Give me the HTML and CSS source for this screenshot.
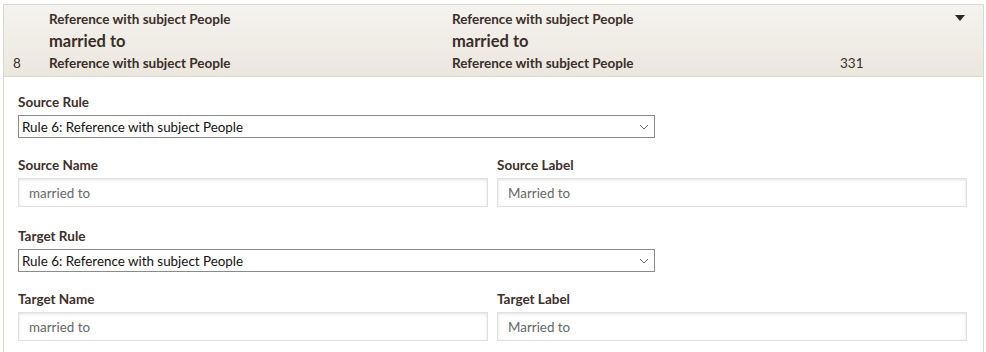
FILE: index.html
```html
<html>
<head>
<title>Mapping</title>
<link rel="stylesheet" href="styles.css">
</head>
<body>

<div class="panel">
	<div class="panelHead">
		<div class="num"></div>
		<div class="cell">Reference with subject People</div>
		<div class="cell">Reference with subject People</div>
		<div class="cell"></div>
		<div class="arrow"><svg width="10" height="6" viewBox="0 0 10 6"><path d="M0 0 L10 0 L5 6 Z" fill="#2e2622"/></svg></div>

		<div class="num"></div>
		<div class="cell big">married to</div>
		<div class="cell big">married to</div>
		<div class="cell"></div>
		<div></div>

		<div class="num">8</div>
		<div class="cell">Reference with subject People</div>
		<div class="cell">Reference with subject People</div>
		<div class="cell count">331</div>
		<div></div>
	</div>

	<div class="panelBody">
		<div class="group">
			<label>Source Rule</label>
			<div class="select">
				<span>Rule 6: Reference with subject People</span>
				<svg width="10" height="6" viewBox="0 0 10 6"><path d="M1 1 L5 5 L9 1" fill="none" stroke="#666" stroke-width="1"/></svg>
			</div>
		</div>
		<div class="row">
			<div class="group">
				<label>Source Name</label>
				<input type="text" value="married to">
			</div>
			<div class="group">
				<label>Source Label</label>
				<input type="text" value="Married to">
			</div>
		</div>
		<div class="group">
			<label>Target Rule</label>
			<div class="select">
				<span>Rule 6: Reference with subject People</span>
				<svg width="10" height="6" viewBox="0 0 10 6"><path d="M1 1 L5 5 L9 1" fill="none" stroke="#666" stroke-width="1"/></svg>
			</div>
		</div>
		<div class="row">
			<div class="group">
				<label>Target Name</label>
				<input type="text" value="married to">
			</div>
			<div class="group">
				<label>Target Label</label>
				<input type="text" value="Married to">
			</div>
		</div>
	</div>
</div>

</body>
</html>
```

FILE: styles.css
```css
body {
    margin: 0;
    background: #fff;
    font-family: Lato, "Open Sans", sans-serif;
    color: #3b2e28;
    overflow: hidden;
}
.panel {
    margin: 4px 2px 0 3px;
    border: 1px solid #dcd8ca;
    border-bottom: none;
    height: 347px;
}
.panelHead {
    display: grid;
    grid-template-columns: 45px 403px 388px 1fr 40px;
    grid-auto-rows: 22px;
    padding: 3px 0 2px;
    background: linear-gradient(#f5f3ee, #ebe7df);
    border-bottom: 1px solid #dcd8ca;
    font-size: 13.5px;
    font-weight: bold;
    align-items: center;
}
.panelHead .num,
.panelHead .count {
    font-weight: normal;
}
.panelHead .num {
    padding-left: 9px;
}
.panelHead .big {
    font-size: 16.5px;
}
.panelHead .arrow {
    display: flex;
    align-items: center;
    padding-left: 12px;
    padding-bottom: 3px;
}
.panelBody {
    padding: 17px 15px 0 14px;
}
.group {
    display: flex;
    flex-direction: column;
    margin-bottom: 19px;
}
.row .group {
    margin-bottom: 21px;
}
label {
    font-size: 13.5px;
    font-weight: bold;
    line-height: 17px;
    margin-bottom: 4px;
    color: #3d2f29;
}
.select {
    width: 637px;
    height: 23px;
    box-sizing: border-box;
    border: 1px solid #8a8a8a;
    display: flex;
    align-items: center;
    justify-content: space-between;
    padding: 0 5px 0 3px;
    font-size: 13.4px;
    color: #111;
}
.row {
    display: flex;
    gap: 9px;
}
.row .group {
    width: 470px;
}
input {
    height: 29px;
    box-sizing: border-box;
    border: 1px solid #e0e0e0;
    box-shadow: inset 0 1px 3px rgba(0, 0, 0, 0.12);
    padding: 0 10px;
    font-family: Lato, "Open Sans", sans-serif;
    font-size: 13.4px;
    color: #666;
    background: #fff;
}
```
